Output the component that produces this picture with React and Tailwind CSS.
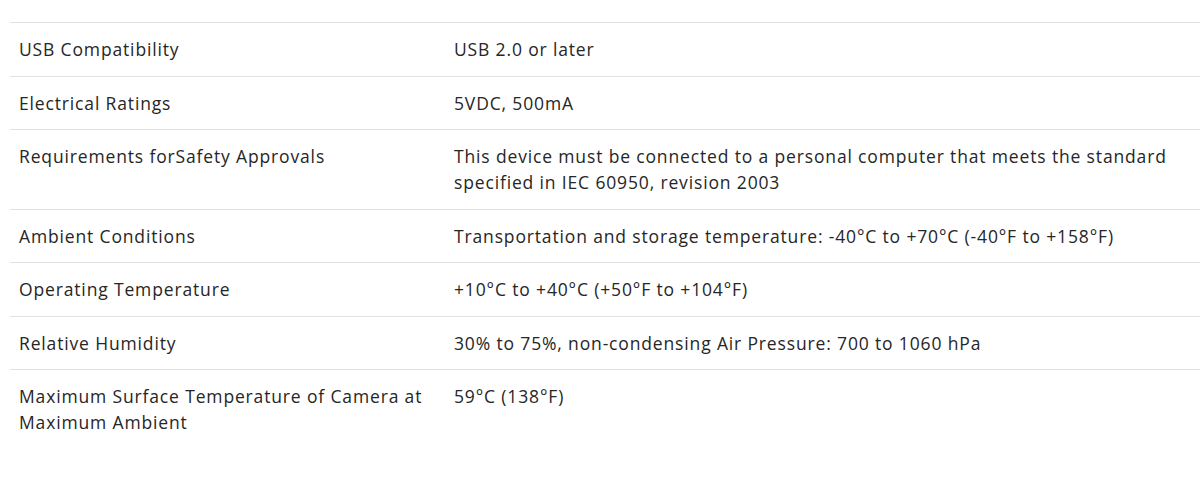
export default function App() {
  const specs = [
    { label: 'USB Compatibility', value: 'USB 2.0 or later' },
    { label: 'Electrical Ratings', value: '5VDC, 500mA' },
    {
      label: 'Requirements forSafety Approvals',
      value: 'This device must be connected to a personal computer that meets the standard specified in IEC 60950, revision 2003'
    },
    { label: 'Ambient Conditions', value: 'Transportation and storage temperature: -40°C to +70°C (-40°F to +158°F)' },
    { label: 'Operating Temperature', value: '+10°C to +40°C (+50°F to +104°F)' },
    { label: 'Relative Humidity', value: '30% to 75%, non-condensing Air Pressure: 700 to 1060 hPa' },
    { label: 'Maximum Surface Temperature of Camera at Maximum Ambient', value: '59°C (138°F)' }
  ];

  return (
    <div className="min-h-[495px] bg-white pt-[22px] pl-[10px] font-['Open_Sans',sans-serif] text-[17.5px] leading-[26px] tracking-[0.85px] text-[#262626]">
      <div className="flex flex-col">
        {specs.map((row) => (
          <div key={row.label} className="flex border-t border-[#e3e3e3]">
            <div className="w-[444px] shrink-0 pt-[13px] pb-[13.5px] pl-[9px] pr-[20px]">{row.label}</div>
            <div className="flex-1 pt-[13px] pb-[13.5px] pr-[20px]">{row.value}</div>
          </div>
        ))}
      </div>
    </div>
  );
}
